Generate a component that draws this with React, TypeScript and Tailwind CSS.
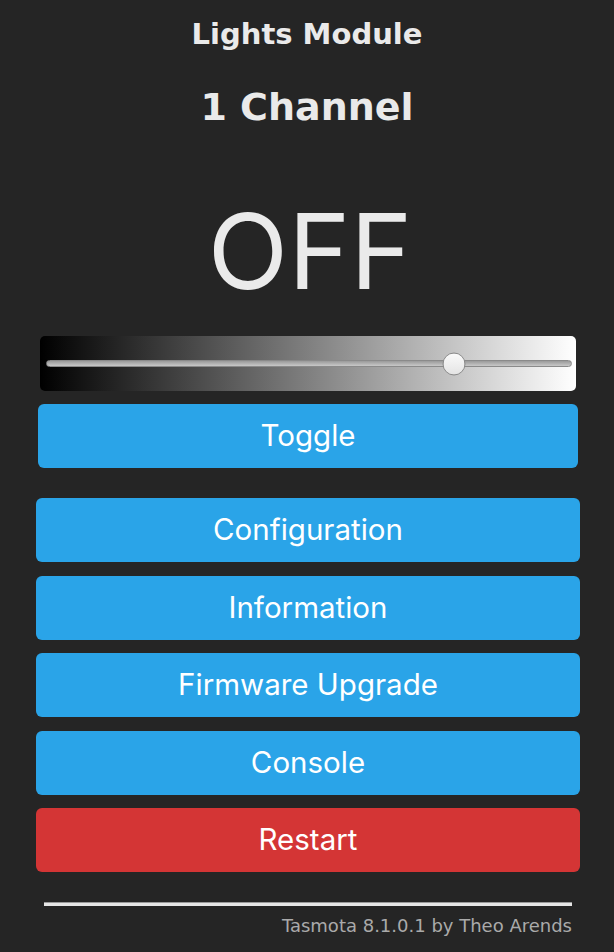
const verdana = "font-['Verdana','DejaVu_Sans',sans-serif]";
const sf = "font-['Inter','Helvetica','Liberation_Sans',sans-serif]";

function Btn({ label, red }: { label: string; red?: boolean }) {
  return (
    <button
      className={`flex h-[64px] w-full items-center justify-center rounded-[6px] text-[29.5px] leading-none text-white ${sf} ${
        red ? "bg-[#d43535]" : "bg-[#2aa4e8]"
      }`}
    >
      {label}
    </button>
  );
}

export default function App() {
  const level = 77.6;
  return (
    <div className="min-h-[952px] w-[614px] bg-[#252525] text-[#eaeaea]">
      <div className="flex flex-col items-center pt-[17px]">
        <h3 className={`${verdana} text-[29px] font-bold leading-[34px]`}>Lights Module</h3>
        <h2 className={`${verdana} mt-[33px] text-[38px] font-bold leading-[46px]`}>1 Channel</h2>
        <div className={`${sf} mt-[61px] pl-[6px] text-[105px] leading-[120px]`}>OFF</div>
      </div>

      <div className="mt-[25px] pl-[40px] pr-[38px]">
        <div className="flex h-[55px] items-center rounded-[5px] bg-[linear-gradient(to_right,#000,#fff)] pl-[6px] pr-[4px]">
          <div className="relative h-[7px] w-full rounded-full border border-[#8a8a8a] bg-[linear-gradient(to_bottom,#9a9a9a,#c8c8c8)]">
            <div
              className="absolute top-1/2 h-[23px] w-[23px] -translate-x-1/2 -translate-y-1/2 rounded-full border border-[#8a8a8a] bg-[linear-gradient(to_bottom,#fafafa,#e4e4e4)]"
              style={{ left: `${level}%` }}
            />
          </div>
        </div>
      </div>

      <div className="mt-[13px] pl-[38px] pr-[36px]">
        <Btn label="Toggle" />
      </div>

      <div className="mt-[30px] flex flex-col gap-[13.5px] pl-[36px] pr-[34px]">
        <Btn label="Configuration" />
        <Btn label="Information" />
        <Btn label="Firmware Upgrade" />
        <Btn label="Console" />
        <Btn label="Restart" red />
      </div>

      <div className="mt-[30px] pl-[44px] pr-[42px]">
        <div className="h-[4px] border-t border-[#999] bg-[#e6e6e6]" />
        <div className={`${verdana} mt-[8px] text-right text-[18px] leading-[24px] text-[#aaa]`}>
          Tasmota 8.1.0.1 by Theo Arends
        </div>
      </div>
    </div>
  );
}
